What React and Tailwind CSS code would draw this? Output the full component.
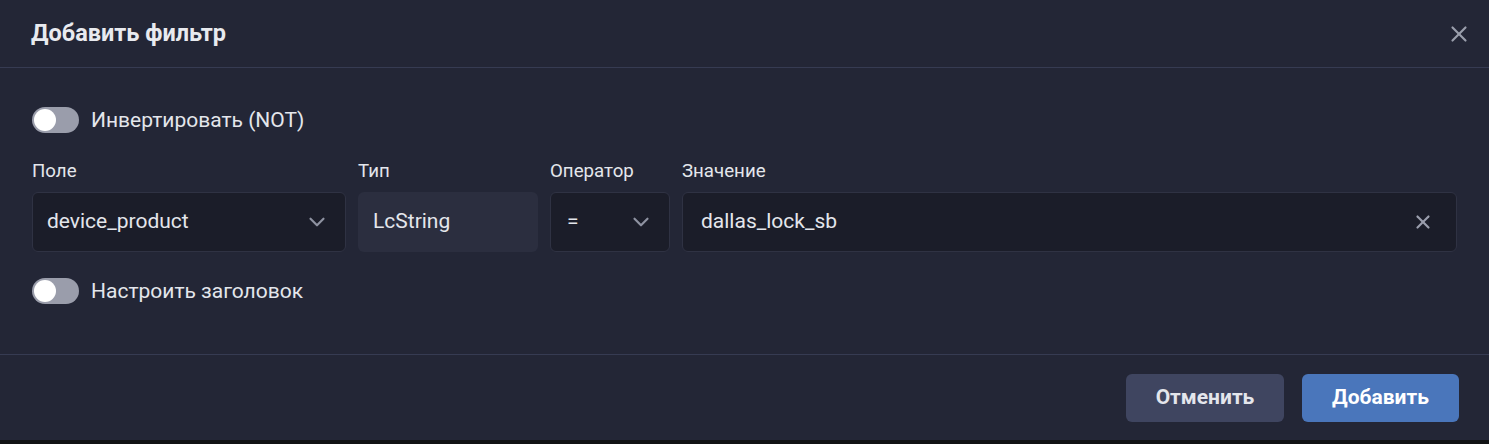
import { X, ChevronDown } from "lucide-react";

function Toggle({ label }) {
  return (
    <div className="flex items-center gap-3">
      <div className="flex h-[26px] w-[47px] items-center rounded-full bg-[#9a9dab] px-[2px]">
        <div className="h-[22px] w-[22px] rounded-full bg-white" />
      </div>
      <span className="text-[21px] leading-[26px] text-[#e4e6ec]">{label}</span>
    </div>
  );
}

function Field({ label, width, children }) {
  return (
    <div className={`flex flex-col gap-[10px] ${width}`}>
      <span className="text-[18.7px] leading-[22px] text-[#e4e6ec]">{label}</span>
      {children}
    </div>
  );
}

export default function App() {
  return (
    <div className="h-[444px] w-[1489px] bg-[#111214] font-['Roboto',sans-serif]">
      <div className="flex h-[440px] flex-col bg-[#232636]">
        <div className="flex h-[68px] items-center justify-between border-b border-[#363b52] pl-[31px] pr-[17px]">
          <h2 className="text-[23.5px] font-bold text-[#e8eaef]">Добавить фильтр</h2>
          <X size={26} strokeWidth={2} className="text-[#9a9eac]" />
        </div>

        <div className="flex flex-col border-b border-[#363b52] px-8 pb-[50px] pt-[39px]">
          <Toggle label="Инвертировать (NOT)" />

          <div className="mt-[27px] flex gap-3">
            <Field label="Поле" width="w-[314px]">
              <div className="flex h-[60px] items-center justify-between rounded-md border border-[#2f3243] bg-[#1b1d29] pl-[14px] pr-[15px]">
                <span className="text-[21px] text-[#e4e6ec]">device_product</span>
                <ChevronDown size={26} strokeWidth={2} className="text-[#8e92a1]" />
              </div>
            </Field>
            <Field label="Тип" width="w-[180px]">
              <div className="flex h-[60px] items-center rounded-md bg-[#2b2e3f] px-[15px]">
                <span className="text-[21px] text-[#e4e6ec]">LcString</span>
              </div>
            </Field>
            <Field label="Оператор" width="w-[120px]">
              <div className="flex h-[60px] items-center justify-between rounded-md border border-[#2f3243] bg-[#1b1d29] pl-[16px] pr-[15px]">
                <span className="text-[21px] text-[#e4e6ec]">=</span>
                <ChevronDown size={26} strokeWidth={2} className="text-[#8e92a1]" />
              </div>
            </Field>
            <Field label="Значение" width="flex-1">
              <div className="flex h-[60px] items-center justify-between rounded-md border border-[#2f3243] bg-[#1b1d29] pl-[18px] pr-[22px]">
                <span className="text-[21px] text-[#e4e6ec]">dallas_lock_sb</span>
                <X size={22} strokeWidth={2.4} className="text-[#9a9eac]" />
              </div>
            </Field>
          </div>

          <div className="mt-[26px]">
            <Toggle label="Настроить заголовок" />
          </div>
        </div>

        <div className="flex flex-1 items-center justify-end gap-[18px] px-[30px]">
          <button className="h-[48px] w-[158px] rounded-md bg-[#3f4560] text-[21px] font-bold text-[#e4e6ec]">
            Отменить
          </button>
          <button className="h-[48px] w-[157px] rounded-md bg-[#4a76bb] text-[21px] font-bold text-white">
            Добавить
          </button>
        </div>
      </div>
      <div className="h-[4px] overflow-hidden pl-[795px]">
        <div className="text-[34px] font-bold leading-[40px] text-[#5b5e66]">Ничего не найдено</div>
      </div>
    </div>
  );
}
